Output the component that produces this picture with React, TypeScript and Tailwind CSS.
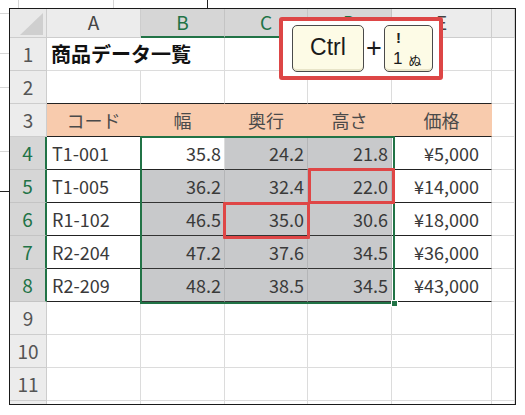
const COL_LETTERS = ["A", "B", "C", "D", "E", ""];
const SELECTED_COLS = [1, 2, 3];
const SELECTED_ROWS = [4, 5, 6, 7, 8];

const HEADS = ["コード", "幅", "奥行", "高さ", "価格"];

const DATA = [
  ["T1-001", "35.8", "24.2", "21.8", "¥5,000"],
  ["T1-005", "36.2", "32.4", "22.0", "¥14,000"],
  ["R1-102", "46.5", "35.0", "30.6", "¥18,000"],
  ["R2-204", "47.2", "37.6", "34.5", "¥36,000"],
  ["R2-209", "48.2", "38.5", "34.5", "¥43,000"],
];

function RowHeader({ n }: { n: number }) {
  const sel = SELECTED_ROWS.includes(n);
  return (
    <div
      className={
        sel
          ? "flex items-center justify-center border-b border-r-2 border-b-[#c4c4c4] border-r-[#217346] bg-[#d6d6d6] text-[19px] text-[#217346]"
          : "flex items-center justify-center border-b border-r border-[#cdcdcd] bg-[#ececec] text-[19px] text-[#555]"
      }
    >
      {n <= 11 ? n : ""}
    </div>
  );
}

function DataCell({ r, c }: { r: number; c: number }) {
  // row 1: title spans A:B
  if (r === 1 && c === 1) return null;
  if (r === 1 && c === 0) {
    return (
      <div className="col-span-2 flex items-center whitespace-nowrap border-b border-r border-[#dcdcdc] pl-[4px] text-[20px] font-bold text-[#111]">
        商品データ一覧
      </div>
    );
  }
  if (r === 2 && c < 5) {
    return <div className="border-b border-r border-[#dcdcdc] border-b-[#222]" />;
  }
  if (r === 3 && c < 5) {
    return (
      <div className="flex items-center justify-center border-b border-r border-r-[#f8cbad] border-b-[#222] bg-[#f8cbad] pt-[1px] text-[18px] text-[#4a4a4a]">
        {HEADS[c]}
      </div>
    );
  }
  if (r >= 4 && r <= 8 && c < 5) {
    const v = DATA[r - 4][c];
    if (c === 0) {
      return (
        <div className="flex items-center border-b border-r border-r-[#dcdcdc] border-b-[#222] pl-[5px] pt-[1px] text-[18px] text-[#3a3a3a]">
          {v}
        </div>
      );
    }
    if (c === 4) {
      return (
        <div className="flex items-center justify-end border-b border-r border-r-[#dcdcdc] border-b-[#222] pr-[12px] pt-[1px] text-[18px] text-[#3a3a3a]">
          {v}
        </div>
      );
    }
    const active = r === 4 && c === 1;
    return (
      <div
        className={
          active
            ? "flex items-center justify-end border-b border-r border-r-[#dcdcdc] border-b-[#222] bg-white pr-[3px] pt-[1px] text-[18px] text-[#3a3a3a]"
            : "flex items-center justify-end border-b border-r border-r-[#b4b5b7] border-b-[#333] bg-[#c8c9cb] pr-[3px] pt-[1px] text-[18px] text-[#3a3a3a]"
        }
      >
        {v}
      </div>
    );
  }
  if (r === 12) return <div className="border-r border-[#dcdcdc]" />;
  return <div className="border-b border-r border-[#dcdcdc]" />;
}

function KeyCallout() {
  return (
    <div className="absolute left-[269px] top-[8px] z-20 flex h-[63px] w-[164px] items-center rounded-[3px] border-4 border-[#dd4646] bg-white pl-[9px] font-['Liberation_Sans','Noto_Sans_CJK_JP',sans-serif] text-[#1a1a1a]">
      <div className="flex h-[47px] w-[72px] items-center justify-center rounded-[5px] border border-[#4a4a4a] bg-[#fdfbe6] pb-[2px] text-[23px] shadow-[inset_0_-2px_0_#e8e4c8]">
        Ctrl
      </div>
      <div className="flex w-[20px] justify-center text-[27px] leading-none">+</div>
      <div className="flex h-[47px] w-[49px] flex-col rounded-[5px] border border-[#4a4a4a] bg-[#fdfbe6] pl-[8px] pt-[4px] shadow-[inset_0_-2px_0_#e8e4c8]">
        <span className="ml-[3px] font-['Liberation_Sans',sans-serif] text-[15px] font-bold leading-none text-[#222]">
          !
        </span>
        <div className="mt-[5px] flex items-end gap-[6px] leading-none">
          <span className="text-[17px]">1</span>
          <span className="pb-[1px] font-['Noto_Sans_CJK_JP',sans-serif] text-[13px]">ぬ</span>
        </div>
      </div>
    </div>
  );
}

export default function App() {
  const rows = Array.from({ length: 12 }, (_, i) => i + 1);
  return (
    <div className="relative h-[415px] w-[525px] overflow-hidden bg-white pl-[9px] pt-[8px] font-['Noto_Sans_CJK_JP',sans-serif]">
      {/* edge of the sheet behind the window */}
      <svg className="absolute left-0 top-0" width="525" height="415">
        <g stroke="#d6d6d6" strokeWidth="1">
          <line x1="18.5" y1="0" x2="18.5" y2="8" />
          <line x1="113.5" y1="0" x2="113.5" y2="8" />
          <line x1="0" y1="13.5" x2="9" y2="13.5" />
          <line x1="0" y1="53.5" x2="9" y2="53.5" />
          <line x1="0" y1="87.5" x2="9" y2="87.5" />
          <line x1="0" y1="151.5" x2="9" y2="151.5" />
        </g>
        <g stroke="#222" strokeWidth="1">
          <line x1="207.5" y1="0" x2="207.5" y2="8" />
          <line x1="0" y1="191.5" x2="9" y2="191.5" />
        </g>
      </svg>

      <div className="relative h-[397px] w-[507px] overflow-hidden border border-[#1a1a1a] bg-white">
        <div className="grid grid-cols-[37px_94px_84px_83px_84px_100px_23px] grid-rows-[29px_repeat(11,33px)_4px]">
          {/* corner */}
          <div className="flex items-end justify-end border-b border-r border-[#cdcdcd] bg-[#e9e9e9] pb-[2px] pr-[3px]">
            <svg width="23" height="22">
              <polygon points="23,0 23,22 0,22" fill="#cfcfcf" />
            </svg>
          </div>
          {COL_LETTERS.map((l, i) => {
            const sel = SELECTED_COLS.includes(i);
            return (
              <div
                key={i}
                className={
                  sel
                    ? "flex items-center justify-center border-b-2 border-r border-b-[#217346] border-r-[#c4c4c4] bg-[#d6d6d6] pb-[1px] text-[19px] text-[#217346]"
                    : "flex items-center justify-center border-b border-r border-[#cdcdcd] bg-[#ececec] pb-[1px] text-[19px] text-[#444]"
                }
              >
                {l}
              </div>
            );
          })}
          {rows.map((r) => [
            <RowHeader key={`h${r}`} n={r} />,
            ...[0, 1, 2, 3, 4, 5].map((c) => <DataCell key={`${r}-${c}`} r={r} c={c} />),
          ])}
        </div>

        {/* selection B4:D8 with fill handle */}
        <div className="pointer-events-none absolute left-[130px] top-[127px] h-[168px] w-[255px] border-2 border-[#217346]">
          <div className="absolute -bottom-[5px] -right-[5px] h-[7px] w-[7px] border border-white bg-[#217346]" />
        </div>

        {/* highlighted cells */}
        <div className="absolute left-[298px] top-[159px] h-[36px] w-[87px] rounded-[1px] border-[3px] border-[#df4646]" />
        <div className="absolute left-[213px] top-[193px] h-[37px] w-[87px] rounded-[1px] border-[3px] border-[#df4646]" />

        <KeyCallout />
      </div>
    </div>
  );
}
